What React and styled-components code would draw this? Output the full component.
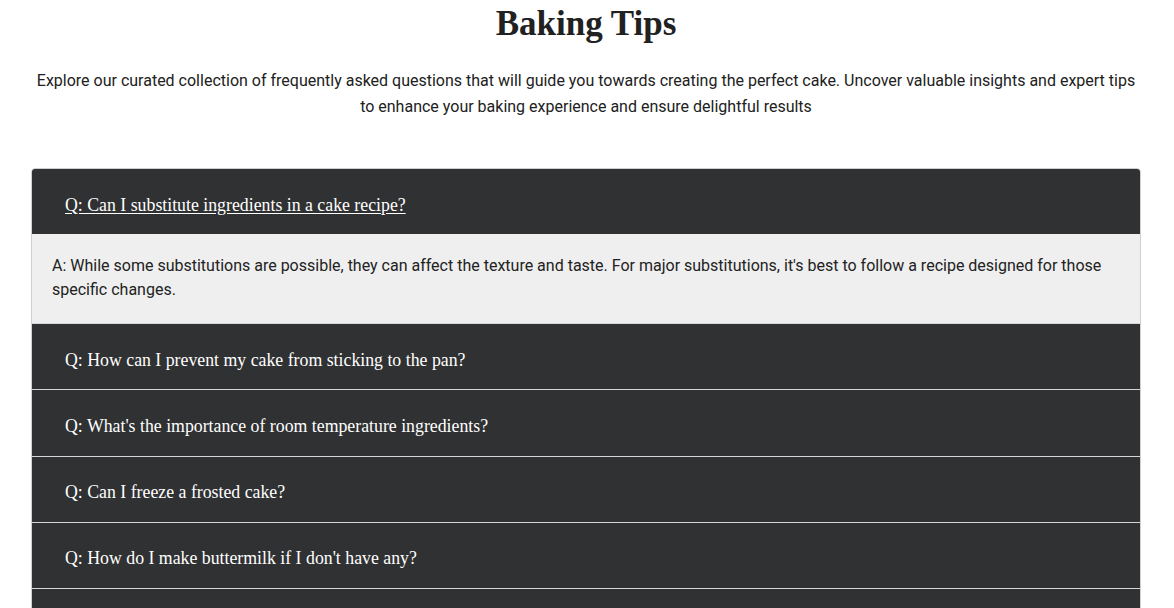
import React, { useState } from "react";
import styled, { createGlobalStyle } from "styled-components";

const GlobalStyle = createGlobalStyle`
  body {
    margin: 0;
    background: #ffffff;
    font-family: Roboto, "Liberation Sans", sans-serif;
  }
`;

const Page = styled.div`
  padding: 0 33px 0 31px;
  color: #212121;
`;

const Title = styled.h1`
  margin: 0;
  padding-top: 2px;
  text-align: center;
  font-family: "Liberation Serif", serif;
  font-weight: 700;
  font-size: 35px;
  line-height: 44px;
  color: #212121;
`;

const Intro = styled.p`
  margin: 22px 0 48px;
  text-align: center;
  font-size: 16px;
  line-height: 26px;
  color: #212121;
`;

const Accordion = styled.div`
  border: 1px solid #cfcfcf;
  border-radius: 4px;
  overflow: hidden;
`;

const Item = styled.div`
  & + & {
    border-top: 1px solid #d6d6d6;
  }
`;

const Question = styled.button`
  display: block;
  width: 100%;
  height: 65.25px;
  padding: 7px 33px 0;
  border: none;
  background: #303133;
  color: #ffffff;
  text-align: left;
  font-family: "Liberation Serif", serif;
  font-size: 17.8px;
  cursor: pointer;
  text-decoration: ${(p) => (p.$active ? "underline" : "none")};
  text-underline-offset: 2px;
`;

const Answer = styled.div`
  padding: 20px 20px 20.75px;
  background: #efefef;
  font-size: 16px;
  line-height: 24px;
  color: #222222;
`;

const faqs = [
  {
    q: "Q: Can I substitute ingredients in a cake recipe?",
    a: "A: While some substitutions are possible, they can affect the texture and taste. For major substitutions, it's best to follow a recipe designed for those specific changes.",
  },
  { q: "Q: How can I prevent my cake from sticking to the pan?", a: "" },
  { q: "Q: What's the importance of room temperature ingredients?", a: "" },
  { q: "Q: Can I freeze a frosted cake?", a: "" },
  { q: "Q: How do I make buttermilk if I don't have any?", a: "" },
  { q: "Q: Why did my cake sink in the middle?", a: "" },
];

function App() {
  const [open, setOpen] = useState(0);

  return (
    <Page>
      <GlobalStyle />
      <Title>Baking Tips</Title>
      <Intro>
        Explore our curated collection of frequently asked questions that will
        guide you towards creating the perfect cake. Uncover valuable insights
        and expert tips to enhance your baking experience and ensure delightful
        results
      </Intro>
      <Accordion>
        {faqs.map((f, i) => (
          <Item key={i}>
            <Question $active={open === i} onClick={() => setOpen(i)}>
              {f.q}
            </Question>
            {open === i && <Answer>{f.a}</Answer>}
          </Item>
        ))}
      </Accordion>
    </Page>
  );
}

export default App;
